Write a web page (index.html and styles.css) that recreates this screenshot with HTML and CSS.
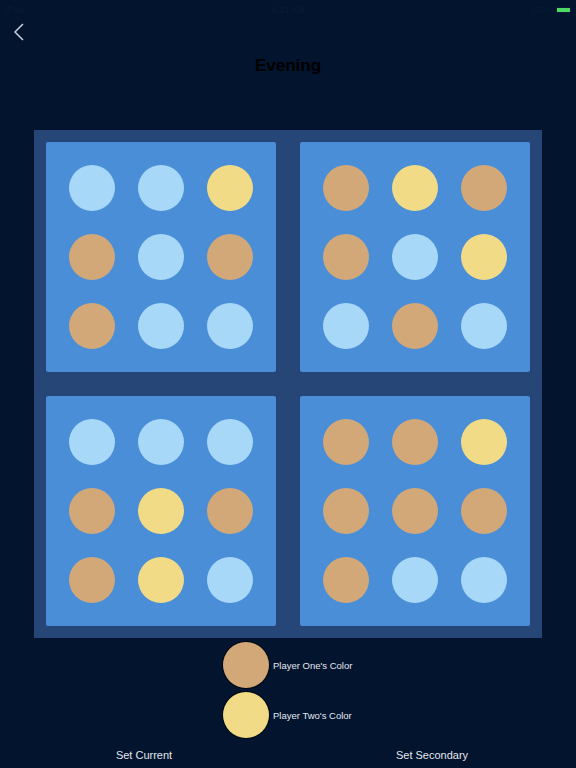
FILE: index.html
```html
<!DOCTYPE html>
<html>
<head>
<meta charset="utf-8">
<link rel="stylesheet" href="styles.css">
</head>
<body>
<div class="status">
  <div class="status-left">iPad <svg class="wifi" width="10" height="8" viewBox="0 0 10 8"><path d="M5 7.5 L0.5 2.5 A6.5 6.5 0 0 1 9.5 2.5 Z" fill="#07152b"/></svg></div>
  <div class="status-time">9:41 AM</div>
  <div class="status-right">100% <span class="battery"><span class="battery-fill"></span></span></div>
</div>
<div class="nav">
  <svg class="back" width="12" height="18" viewBox="0 0 12 18"><path d="M10 1 L2 9 L10 17" fill="none" stroke="#c9d1dd" stroke-width="1.5"/></svg>
</div>
<h1 class="title">Evening</h1>
<div class="board">
  <div class="square">
    <span class="dot blue"></span><span class="dot blue"></span><span class="dot yellow"></span>
    <span class="dot tan"></span><span class="dot blue"></span><span class="dot tan"></span>
    <span class="dot tan"></span><span class="dot blue"></span><span class="dot blue"></span>
  </div>
  <div class="square">
    <span class="dot tan"></span><span class="dot yellow"></span><span class="dot tan"></span>
    <span class="dot tan"></span><span class="dot blue"></span><span class="dot yellow"></span>
    <span class="dot blue"></span><span class="dot tan"></span><span class="dot blue"></span>
  </div>
  <div class="square">
    <span class="dot blue"></span><span class="dot blue"></span><span class="dot blue"></span>
    <span class="dot tan"></span><span class="dot yellow"></span><span class="dot tan"></span>
    <span class="dot tan"></span><span class="dot yellow"></span><span class="dot blue"></span>
  </div>
  <div class="square">
    <span class="dot tan"></span><span class="dot tan"></span><span class="dot yellow"></span>
    <span class="dot tan"></span><span class="dot tan"></span><span class="dot tan"></span>
    <span class="dot tan"></span><span class="dot blue"></span><span class="dot blue"></span>
  </div>
</div>
<div class="legend">
  <div class="legend-row"><span class="swatch tan"></span><span class="legend-label">Player One's Color</span></div>
  <div class="legend-row"><span class="swatch yellow"></span><span class="legend-label">Player Two's Color</span></div>
</div>
<div class="actions">
  <div class="action">Set Current</div>
  <div class="action">Set Secondary</div>
</div>
</body>
</html>
```
FILE: styles.css
```css
html, body {
  margin: 0;
  padding: 0;
}
body {
  background: #02142e;
  font-family: "Liberation Sans", Arial, sans-serif;
  width: 576px;
  height: 768px;
  overflow: hidden;
}
.status {
  height: 20px;
  display: flex;
  align-items: center;
  justify-content: space-between;
  padding: 0 5px;
  font-size: 9px;
  color: #0a1b34;
}
.status-left, .status-right {
  display: flex;
  align-items: center;
  gap: 3px;
  flex: 1;
}
.status-right {
  justify-content: flex-end;
}
.status-time {
  font-weight: bold;
}
.battery {
  display: inline-block;
  width: 13px;
  height: 4px;
  border: 1px solid #0a1b34;
  border-radius: 1px;
}
.battery-fill {
  display: block;
  width: 100%;
  height: 100%;
  background: #4cd964;
}
.nav {
  height: 24px;
  padding-left: 13px;
  display: flex;
  align-items: center;
}
.back {
  display: block;
}
.title {
  margin: 11px 0 0;
  text-align: center;
  font-size: 17px;
  line-height: 22px;
  font-weight: bold;
  color: #000;
}
.board {
  margin: 53px auto 0;
  width: 508px;
  box-sizing: border-box;
  padding: 12px;
  background: #254677;
  display: grid;
  grid-template-columns: 230px 230px;
  gap: 24px;
}
.square {
  width: 230px;
  height: 230px;
  box-sizing: border-box;
  background: #4a8ed8;
  border-radius: 2px;
  display: grid;
  grid-template-columns: repeat(3, 46px);
  grid-template-rows: repeat(3, 46px);
  gap: 23px;
  padding: 23px;
}
.dot {
  width: 46px;
  height: 46px;
  border-radius: 50%;
}
.blue { background: #a8d8f8; }
.tan { background: #d3a878; }
.yellow { background: #f2db86; }
.legend {
  margin-top: 4px;
  display: flex;
  flex-direction: column;
  align-items: center;
  gap: 4px;
}
.legend-row {
  display: flex;
  align-items: center;
  gap: 4px;
  width: 130px;
}
.swatch {
  width: 46px;
  height: 46px;
  border-radius: 50%;
  box-shadow: 0 0 0 1px rgba(0, 0, 0, 0.55);
}
.legend-label {
  font-size: 9.5px;
  color: #e4e8ee;
}
.actions {
  margin-top: 9px;
  display: grid;
  grid-template-columns: 1fr 1fr;
}
.action {
  text-align: center;
  font-size: 11px;
  line-height: 16px;
  color: #e2e6ec;
}
```
